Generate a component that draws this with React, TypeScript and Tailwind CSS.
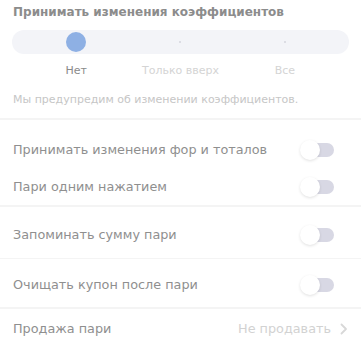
import React, { useState } from 'react';

const font = { fontFamily: '"DejaVu Sans", "Noto Sans", sans-serif' };

function Toggle() {
  return (
    <div className="relative w-[38px] h-[22px] shrink-0">
      <div className="absolute left-[10px] top-[4px] w-[25px] h-[14px] rounded-r-full bg-[#d8d8e4]" />
      <div className="absolute left-[1px] top-[1px] w-[20px] h-[20px] rounded-full bg-white shadow-[0_1px_3px_rgba(0,0,0,0.12)]" />
    </div>
  );
}

function Row({ label, h, pr = 'pr-[24px]', children }: { label: string; h: string; pr?: string; children?: React.ReactNode }) {
  return (
    <div className={`flex items-center justify-between pl-[13px] ${pr} ${h}`}>
      <span className="text-[12.8px] text-[#8f8f8f]">{label}</span>
      {children ?? <Toggle />}
    </div>
  );
}

export default function App() {
  const [level] = useState(0);
  const stops = ['Нет', 'Только вверх', 'Все'];

  return (
    <div className="w-[361px] h-[359px] bg-white overflow-hidden" style={font}>
      <div className="px-[13px] pt-[2px]">
        <h2 className="text-[12px] font-bold text-[#8c8c8c] leading-[20px]">
          Принимать изменения коэффициентов
        </h2>
      </div>

      <div className="mx-[12px] mt-[8px] h-[24px] rounded-full bg-[#f3f4f8] grid grid-cols-3 px-[12px]">
        {stops.map((s, i) => (
          <div key={s} className="flex items-center justify-center">
            {i === level ? (
              <div className="w-[20px] h-[20px] rounded-full bg-[#8eb0e4]" />
            ) : (
              <div className="w-[2px] h-[2px] rounded-full bg-[#d4d6de]" />
            )}
          </div>
        ))}
      </div>

      <div className="mx-[12px] grid grid-cols-3 px-[12px] mt-[9px]">
        {stops.map((s, i) => (
          <div
            key={s}
            className={`text-center text-[11px] leading-[16px] ${i === level ? 'text-[#8a8a8a]' : 'text-[#d4d4d4]'}`}
          >
            {s}
          </div>
        ))}
      </div>

      <p className="px-[13px] mt-[14px] text-[11px] leading-[14px] text-[#c6c6c6]">
        Мы предупредим об изменении коэффициентов.
      </p>

      <div className="mt-[11px] h-[2px] bg-[#f4f4f4]" />

      <div className="pt-[11px]">
        <Row label="Принимать изменения фор и тоталов" h="h-[37px]" />
        <Row label="Пари одним нажатием" h="h-[37px]" />
      </div>

      <div className="h-[2px] bg-[#f4f4f4]" />
      <Row label="Запоминать сумму пари" h="h-[51px] pt-[5px]" />
      <div className="h-[1px] bg-[#f4f4f4]" />
      <Row label="Очищать купон после пари" h="h-[48px] pt-[3px]" />
      <div className="h-[2px] bg-[#f4f4f4]" />
      <Row label="Продажа пари" h="h-[40px]" pr="pr-[13px]">
        <div className="flex items-center gap-[9px] text-[12.8px] text-[#d2d2d2]">
          <span>Не продавать</span>
          <svg width="8" height="12" viewBox="0 0 8 12" fill="none">
            <path d="M1.5 1.5L6 6l-4.5 4.5" stroke="#d8d8d8" strokeWidth="1.8" strokeLinecap="round" strokeLinejoin="round" />
          </svg>
        </div>
      </Row>
    </div>
  );
}
